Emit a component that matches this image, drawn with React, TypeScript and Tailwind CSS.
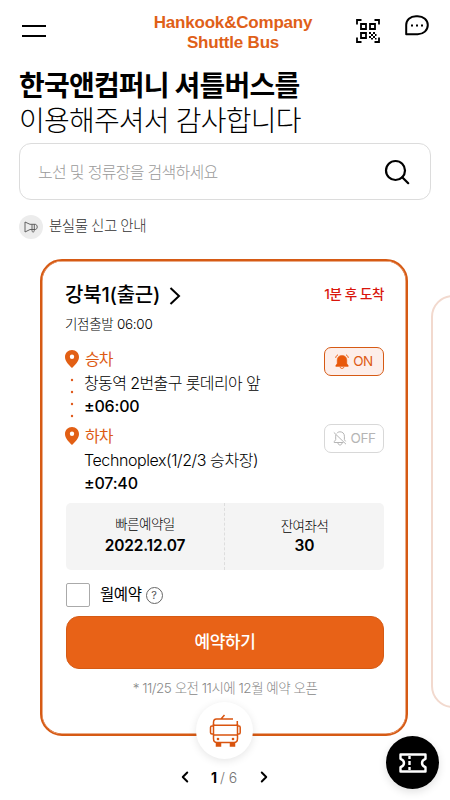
import React from "react"
import { ChevronLeft, ChevronRight } from "lucide-react"

interface StopProps {
  label: string
  name: React.ReactNode
  time: string
  children: React.ReactNode
}

const HamburgerIcon = () => (
  <svg width="24" height="14" viewBox="0 0 24 14" fill="none" stroke="#000" strokeWidth="2">
    <path d="M0 2h24M0 12h24" />
  </svg>
)

const QrIcon = () => (
  <svg width="24" height="24" viewBox="0 0 24 24" fill="none" stroke="#000" strokeWidth="1.8">
    <path d="M1 5.500V1h4.500M18.500 1H23v4.500M23 18.500V23h-4.500M5.500 23H1v-4.500" />
    <path d="M5 5h5v5H5zM14 5h5v5h-5zM5 14h5v5H5z" />
    <path
      d="M13 13h2v2h-2zM17 13h2v2h-2zM15 15h2v2h-2zM19 15h1.5v2H19zM13 17h2v2h-2zM17 17h2v2h-2zM15 19h2v1.5h-2zM19 19h1.5v1.5H19z"
      fill="#000"
      stroke="none"
    />
  </svg>
)

const ChatIcon = () => (
  <svg width="24" height="21" viewBox="0 0 24 21" fill="none" stroke="#000" strokeWidth="2">
    <path d="M1.200 19.300V10C1.200 5 5.200 1.200 11 1.200h1.700c5.700 0 10.100 3.800 10.100 8.900s-4.400 9.200-10.100 9.200z" strokeLinejoin="round" />
    <path d="M6 10.500h2M11 10.500h2M16 10.500h2" />
  </svg>
)

const SearchIcon = () => (
  <svg width="26" height="26" viewBox="0 0 26 26" fill="none" stroke="#000" strokeWidth="2.200">
    <circle cx="11.500" cy="11.500" r="9.500" />
    <path d="M18.200 18.200l6 6" strokeLinecap="round" />
  </svg>
)

const MegaphoneIcon = () => (
  <svg width="14" height="12" viewBox="0 0 14 12" fill="none" stroke="#555" strokeWidth="0.9">
    <path d="M1 1v10l5-2.500h5.200c1.200 0 2-1.100 2-2.500s-.8-2.700-2-2.700H6z" strokeLinejoin="round" />
    <path d="M8 3.300v6.200c0 .9.400 1.500 1.100 1.500s1.200-.6 1.200-1.500V3.300" />
  </svg>
)

const PinIcon = () => (
  <svg width="14" height="18" viewBox="0 0 14 18">
    <path
      d="M7 0C3 0 0 3 0 6.900 0 11.500 4.300 15.200 7 18c2.700-2.800 7-6.500 7-11.100C14 3 11 0 7 0zm0 9a2.200 2.200 0 1 1 0-4.400A2.200 2.200 0 0 1 7 9z"
      fill="#e25f14"
    />
  </svg>
)

const BellOnIcon = () => (
  <svg width="14" height="15" viewBox="0 0 14 15" fill="none" stroke="#e8590c">
    <path d="M.8 11.500l1.400-2V6C2.200 3.200 4.200 1.400 7 1.400S11.800 3.200 11.800 6v3.500l1.400 2v.9H.8z" fill="#e8590c" strokeWidth="0.500" />
    <path d="M5 13c.4 1 1.100 1.400 2 1.400S8.600 14 9 13M.7 3.800C.9 2.500 1.700 1.400 2.900.8M13.300 3.800C13.100 2.500 12.300 1.400 11.100.8" />
  </svg>
)

const BellOffIcon = () => (
  <svg width="14" height="15" viewBox="0 0 14 15" fill="none" stroke="#b5b5b5">
    <path d="M3.800 2.300C4.600 1.300 5.700.8 7 .8c2.600 0 4.400 1.800 4.400 4.400v3.500l1.200 1.700M10.400 11.500H1.200v-.8l1.500-2V5.200c0-.6.100-1 .2-1.500" />
    <path d="M4.900 12c.4 1.500 1.100 2 2.100 2s1.700-.5 2.100-2M.8 1.400L13 13.200" />
  </svg>
)

const BusIcon = () => (
  <svg width="32" height="34" viewBox="0 0 32 34" fill="none" stroke="#d9540f" strokeWidth="1.500">
    <path d="M12 5l3.500-4M4.500 11V8.500c0-2 1-3.500 3-3.500H24M28.300 7v4" />
    <path d="M4.500 11.200h24M4.500 10v14.500c0 2.500 1 4 3.500 4h17c2.500 0 3.500-1.500 3.500-4V10M4.500 21h24" />
    <path d="M4.500 12H3c-1 0-1.500.5-1.500 1.500v5c0 1 .5 1.500 1.500 1.500h1.500M28.500 12H30c1 0 1.200.5 1.200 1.500v5c0 1-.2 1.500-1.200 1.500h-1.500" />
    <path d="M7.500 29v3h4v-3M21.500 29v3h4v-3" fill="#d9540f" />
    <circle cx="9" cy="25" r="1.300" fill="#d9540f" stroke="none" />
    <circle cx="24" cy="25" r="1.300" fill="#d9540f" stroke="none" />
  </svg>
)

const TicketIcon = () => (
  <svg width="28" height="20" viewBox="0 0 28 20" fill="none" stroke="#fff" strokeWidth="2.400">
    <path d="M1.500 1.500h25v4.300c-2.200.8-3.500 2.300-3.500 4.200s1.300 3.400 3.500 4.200v4.300h-25v-4.300C3.700 13.400 5 11.900 5 10S3.700 6.600 1.500 5.800z" strokeLinejoin="round" />
    <path d="M10.500 3v3M10.500 8v4M10.500 14v3" />
  </svg>
)

const Stop = ({ label, name, time, children }: StopProps) => (
  <div className="flex h-[77px] justify-between">
    <div className="-ml-px">
      <div className="flex h-6 items-center gap-[6px] text-[16px] tracking-[-0.9px] text-[#dd5b14]">
        <PinIcon />
        {label}
      </div>
      <div className="pl-[19px] leading-6 text-black">
        <p className="text-[16px] font-light">{name}</p>
        <p className="text-[16px] font-medium leading-[22px] tracking-[-0.2px]">{time}</p>
      </div>
    </div>
    {children}
  </div>
)

export default function App() {
  return (
    <div className="relative flex h-[800px] w-[450px] flex-col overflow-hidden whitespace-nowrap bg-white font-['Inter','Noto_Sans_CJK_KR',sans-serif] text-black">
      <header className="flex h-[69px] items-start pl-[22px] pr-[21px]">
        <div className="mt-6">
          <HamburgerIcon />
        </div>
        <div className="ml-[87px] mt-[13px] w-[200px] text-center font-['Liberation_Sans',Arial,sans-serif] text-[17px] font-bold leading-5 tracking-[-0.2px] text-[#df6018]">
          <p>Hankook&amp;Company</p>
          <p>Shuttle Bus</p>
        </div>
        <div className="ml-[23px] mt-[19px]">
          <QrIcon />
        </div>
        <div className="ml-[25px] mt-[15px]">
          <ChatIcon />
        </div>
      </header>

      <h1 className="h-[74px] pl-[19px] text-[28px] leading-[35px]">
        <span className="block font-bold tracking-[-0.8px]">한국앤컴퍼니 셔틀버스를</span>
        <span className="block font-light tracking-[-0.8px]">이용해주셔서 감사합니다</span>
      </h1>

      <div className="ml-[19px] flex h-[57px] w-[412px] items-center justify-between rounded-[12px] border border-[#dcdcdc] pl-[18px] pr-[20px]">
        <span className="text-[16px] font-light tracking-[-0.7px] text-[#9a9a9a]">노선 및 정류장을 검색하세요</span>
        <SearchIcon />
      </div>

      <div className="ml-[19px] mt-[15px] flex h-6 items-center gap-[6px]">
        <span className="flex size-6 items-center justify-center rounded-full bg-[#ececec]">
          <MegaphoneIcon />
        </span>
        <span className="mb-[2px] text-[14.500px] font-light tracking-[-0.5px] text-[#333]">분실물 신고 안내</span>
      </div>

      <main className="mt-5 flex h-[477px] shrink-0 pl-10">
        <section className="flex w-[368px] shrink-0 flex-col rounded-[22px] border-2 border-[#d65a14] pl-6 pr-[22px] pt-[21px] shadow-[inset_0_0_0_0.5px_#d65a14]">
          <div className="flex h-7 items-center justify-between">
            <h2 className="-ml-px flex items-center text-[20px] font-medium tracking-[-0.2px]">
              <span className="-mt-[2px]">강북1(출근)</span>
              <svg className="ml-[9px]" width="12" height="18" viewBox="0 0 12 18" fill="none" stroke="#000" strokeWidth="2">
                <path d="M1.500 1l8.500 8-8.500 8" />
              </svg>
            </h2>
            <span className="mb-[3px] text-[13.500px] font-medium tracking-[-0.4px] text-[#d9150c]">1분 후 도착</span>
          </div>
          <p className="-ml-px mt-1 h-[21px] text-[13.500px] font-light leading-[20px] tracking-[-0.3px]">기점출발 06:00</p>

          <div className="relative mt-3 h-[156px]">
            <Stop
              label="승차"
              name={<span className="tracking-[-0.6px]">창동역 2번출구 롯데리아 앞</span>}
              time="±06:00"
            >
              <span className="flex h-[29px] w-[60px] items-center justify-center gap-1 rounded-[7px] border border-[#d65a14] bg-[#fdeeea] text-[13.500px] tracking-[-0.5px] text-[#dd5b14]">
                <BellOnIcon />
                ON
              </span>
            </Stop>
            <Stop
              label="하차"
              name={<span className="tracking-[-0.420px]">Technoplex(1/2/3 승차장)</span>}
              time="±07:40"
            >
              <span className="flex h-[29px] w-[60px] items-center justify-center gap-1 rounded-[7px] border border-[#d8d8d8] text-[13.500px] tracking-[-0.5px] text-[#b5b5b5]">
                <BellOffIcon />
                OFF
              </span>
            </Stop>
            {/* dotted line between the two pins */}
            <svg className="absolute left-1 top-[30px]" width="4" height="42" viewBox="0 0 4 42" fill="#e05a1c">
              <circle cx="2" cy="3" r="1.200" />
              <circle cx="2" cy="15" r="1.200" />
              <circle cx="2" cy="27" r="1.200" />
              <circle cx="2" cy="39" r="1.200" />
            </svg>
          </div>

          <div className="flex h-[67px] rounded-[5px] bg-[#f4f4f4] text-center">
            <div className="w-[159px] border-r border-dashed border-[#ddd] pt-[11px]">
              <p className="text-[13.500px] font-light leading-[21px] tracking-[-0.5px]">빠른예약일</p>
              <p className="text-[15.500px] font-semibold leading-[22px] tracking-[-0.2px]">2022.12.07</p>
            </div>
            <div className="w-[159px] pt-[13px]">
              <p className="text-[13.500px] font-light leading-[20px] tracking-[-0.5px]">잔여좌석</p>
              <p className="text-[15.500px] font-semibold leading-[20px]">30</p>
            </div>
          </div>

          <div className="mt-[13px] flex h-6 items-center">
            <span className="size-6 rounded-[2px] border border-[#aaa]" />
            <span className="ml-[10px] text-[15.500px] tracking-[-0.4px]">월예약</span>
            <span className="ml-1 flex size-[17px] items-center justify-center rounded-full border border-[#666] text-[11px] text-[#555]">?</span>
          </div>

          <button className="mt-[9px] h-[53px] rounded-[13px] border border-[#d65a14] bg-[#e86217] text-[17px] font-medium tracking-[-0.4px] text-white">
            예약하기
          </button>
          <p className="mt-[9px] text-center text-[13.500px] font-light leading-[20px] tracking-[-0.5px] text-[#888]">
            * 11/25 오전 11시에 12월 예약 오픈
          </p>
        </section>
        <section className="ml-[23px] mt-9 h-[413px] w-[368px] shrink-0 rounded-[22px] border-2 border-[#f2d9ce]" />
      </main>

      <div className="absolute left-[196px] top-[702px] flex size-[57px] items-center justify-center rounded-full bg-white shadow-[0_2px_8px_rgba(0,0,0,0.1)]">
        <BusIcon />
      </div>

      <nav className="mt-[31px] flex h-5 items-center pl-[176px] text-[14px]">
        <ChevronLeft size={18} strokeWidth={2.6} />
        <span className="ml-[17px] font-bold">1</span>
        <span className="ml-[3px] font-light text-[#777]">/ 6</span>
        <ChevronRight className="ml-[18px]" size={18} strokeWidth={2.6} />
      </nav>

      <button className="absolute left-[386px] top-[736px] flex size-[53px] items-center justify-center rounded-full bg-black shadow-[0_3px_8px_rgba(0,0,0,0.12)]">
        <TicketIcon />
      </button>
    </div>
  )
}
